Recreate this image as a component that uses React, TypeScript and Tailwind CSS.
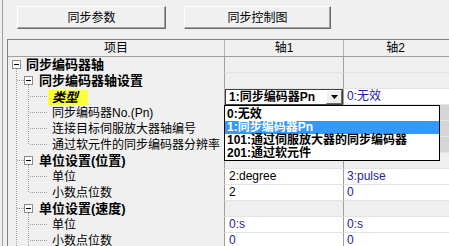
import React from "react";

type LineMode = "none" | "full" | "top" | "bottom";
type Row = {
  kind: "l1" | "l2" | "leaf";
  label: string;
  l1: LineMode;
  l2: LineMode;
  c2?: React.ReactNode;
  c3?: React.ReactNode;
  c3gray?: boolean;
  highlight?: boolean;
};

const BLUE = "text-[#24249c]";

function Gutter({ row }: { row: Row }) {
  const w = row.kind === "l1" ? 18 : row.kind === "l2" ? 31 : 44;
  const dot = { stroke: "#a0a0a0", strokeDasharray: "1 1", shapeRendering: "crispEdges" as const };
  const vline = (x: number, mode: LineMode) => {
    if (mode === "none") return null;
    const y1 = mode === "bottom" ? 12 : 0;
    const y2 = mode === "top" ? 8 : 16;
    return <line x1={x} x2={x} y1={y1} y2={y2} {...dot} />;
  };
  return (
    <svg width={w} height={16} className="shrink-0 block">
      {row.kind === "l1" ? (
        <>
          {vline(8.5, row.l1)}
          <rect x={4.5} y={3.5} width={8} height={8} fill="#fff" stroke="#8c8c8c" shapeRendering="crispEdges" />
          <line x1={6} x2={11} y1={7.5} y2={7.5} stroke="#000" shapeRendering="crispEdges" />
        </>
      ) : row.kind === "l2" ? (
        <>
          {vline(8.5, row.l1)}
          <line x1={9} x2={16} y1={7.5} y2={7.5} {...dot} />
          {vline(20.5, row.l2)}
          <rect x={16.5} y={3.5} width={8} height={8} fill="#fff" stroke="#8c8c8c" shapeRendering="crispEdges" />
          <line x1={18} x2={23} y1={7.5} y2={7.5} stroke="#000" shapeRendering="crispEdges" />
        </>
      ) : (
        <>
          {vline(8.5, row.l1)}
          {vline(20.5, row.l2)}
          <line x1={22} x2={40} y1={7.5} y2={7.5} {...dot} />
        </>
      )}
    </svg>
  );
}

function Combo() {
  return (
    <div className="h-[16px] w-full border border-[#404040] bg-white flex items-center">
      <span className="pl-[3px] flex-1 font-bold text-[12px] leading-[14px] whitespace-nowrap">1:同步编码器Pn</span>
      <div className="w-[16px] h-[14px] bg-[#f0f0f0] border-t border-l border-t-white border-l-white border-r border-b border-r-[#696969] border-b-[#696969] flex items-center justify-center">
        <svg width="7" height="4" className="block">
          <path d="M0 0h7L3.5 4z" fill="#000" />
        </svg>
      </div>
    </div>
  );
}

const rows: Row[] = [
  { kind: "l1", label: "同步编码器轴", l1: "bottom", l2: "none" },
  { kind: "l2", label: "同步编码器轴设置", l1: "full", l2: "bottom" },
  { kind: "leaf", label: "类型", l1: "full", l2: "full", highlight: true, c2: <Combo />, c3: <span className={BLUE}>0:无效</span> },
  { kind: "leaf", label: "同步编码器No.(Pn)", l1: "full", l2: "full", c2: "", c3gray: true },
  { kind: "leaf", label: "连接目标伺服放大器轴编号", l1: "full", l2: "full", c2: "", c3gray: true },
  { kind: "leaf", label: "通过软元件的同步编码器分辨率", l1: "full", l2: "top", c2: "", c3gray: true },
  { kind: "l2", label: "单位设置(位置)", l1: "full", l2: "bottom" },
  { kind: "leaf", label: "单位", l1: "full", l2: "full", c2: "2:degree", c3: <span className={BLUE}>3:pulse</span> },
  { kind: "leaf", label: "小数点位数", l1: "full", l2: "top", c2: "2", c3: <span className={BLUE}>0</span> },
  { kind: "l2", label: "单位设置(速度)", l1: "full", l2: "bottom" },
  { kind: "leaf", label: "单位", l1: "full", l2: "full", c2: <span className={BLUE}>0:s</span>, c3: <span className={BLUE}>0:s</span> },
  { kind: "leaf", label: "小数点位数", l1: "full", l2: "full", c2: <span className={BLUE}>0</span>, c3: <span className={BLUE}>0</span> },
];

function Btn({ w, children }: { w: string; children: React.ReactNode }) {
  return (
    <div
      className={`${w} h-[23px] bg-[#f0f0f0] border border-t-white border-l-white border-r-[#696969] border-b-[#696969] shadow-[inset_-1px_-1px_0_#a0a0a0] flex items-center justify-center text-[12px] leading-[14px]`}
    >
      {children}
    </div>
  );
}

export default function App() {
  return (
    <div className="w-[449px] h-[246px] overflow-hidden bg-[#f0f0f0] flex text-black font-['Liberation_Sans','Noto_Sans_CJK_SC',sans-serif]">
      <div className="w-[2px] shrink-0" />
      <div className="w-px shrink-0 bg-[#a0a0a0]" />
      <div className="flex-1 flex flex-col min-w-0">
        <div className="flex gap-[18px] pl-[14px] pt-[6px]">
          <Btn w="w-[149px]">同步参数</Btn>
          <Btn w="w-[147px]">同步控制图</Btn>
        </div>
        <div className="relative mt-[10px] ml-[4px] flex-1 border-l border-t border-[#808080] bg-[#f0f0f0]">
          <div className="flex h-[17px] border-b border-[#a0a0a0] text-[12px] leading-[16px]">
            <div className="w-[216px] shrink-0 text-center">项目</div>
            <div className="w-[119px] shrink-0 border-l border-[#b4b4b4] text-center">轴1</div>
            <div className="flex-1 border-l border-[#b4b4b4] text-center pr-[2px]">轴2</div>
          </div>
          {rows.map((r, i) => {
            const cat = r.kind !== "leaf";
            return (
              <div key={i} className="flex h-[16px]">
                <div className="w-[216px] shrink-0 flex items-center pl-0 whitespace-nowrap overflow-hidden">
                  <Gutter row={r} />
                  {r.kind === "leaf" ? (
                    r.highlight ? (
                      <span className="ml-[-4px] h-[15px] pl-[4px] pr-[10px] bg-[#ffff3a] font-bold italic text-[13px] leading-[15px]">类型</span>
                    ) : (
                      <span className="text-[12px] leading-[16px]">{r.label}</span>
                    )
                  ) : (
                    <span className="font-bold text-[13px] leading-[16px]">{r.label}</span>
                  )}
                </div>
                <div
                  className={`w-[119px] shrink-0 border-l border-[#a0a0a0] ${cat ? "bg-[#efefef]" : "bg-white"} ${r.highlight ? "" : "border-b border-b-[#e4e4e4] pl-[4px]"} text-[12px] leading-[15px] whitespace-nowrap overflow-hidden flex items-center`}
                >
                  {r.c2}
                </div>
                <div
                  className={`flex-1 border-l border-[#a0a0a0] ${cat ? "bg-[#efefef]" : r.c3gray ? "bg-[#d6d6d6]" : "bg-white"} border-b border-b-[#e4e4e4] pl-[3px] text-[12px] leading-[15px] whitespace-nowrap overflow-hidden flex items-center`}
                >
                  {r.c3}
                </div>
              </div>
            );
          })}
          <div className="absolute left-[216px] top-[65px] w-[216px] border border-black bg-white pt-px font-bold text-[12px] whitespace-nowrap">
            <div className="h-[14px] leading-[14px] pl-[2px]">0:无效</div>
            <div className="h-[13px] leading-[13px] pl-[2px] bg-[#3399ff] text-white">1:同步编码器Pn</div>
            <div className="h-[13px] leading-[13px] pl-[2px]">101:通过伺服放大器的同步编码器</div>
            <div className="h-[13px] leading-[13px] pl-[2px]">201:通过软元件</div>
          </div>
        </div>
      </div>
    </div>
  );
}
